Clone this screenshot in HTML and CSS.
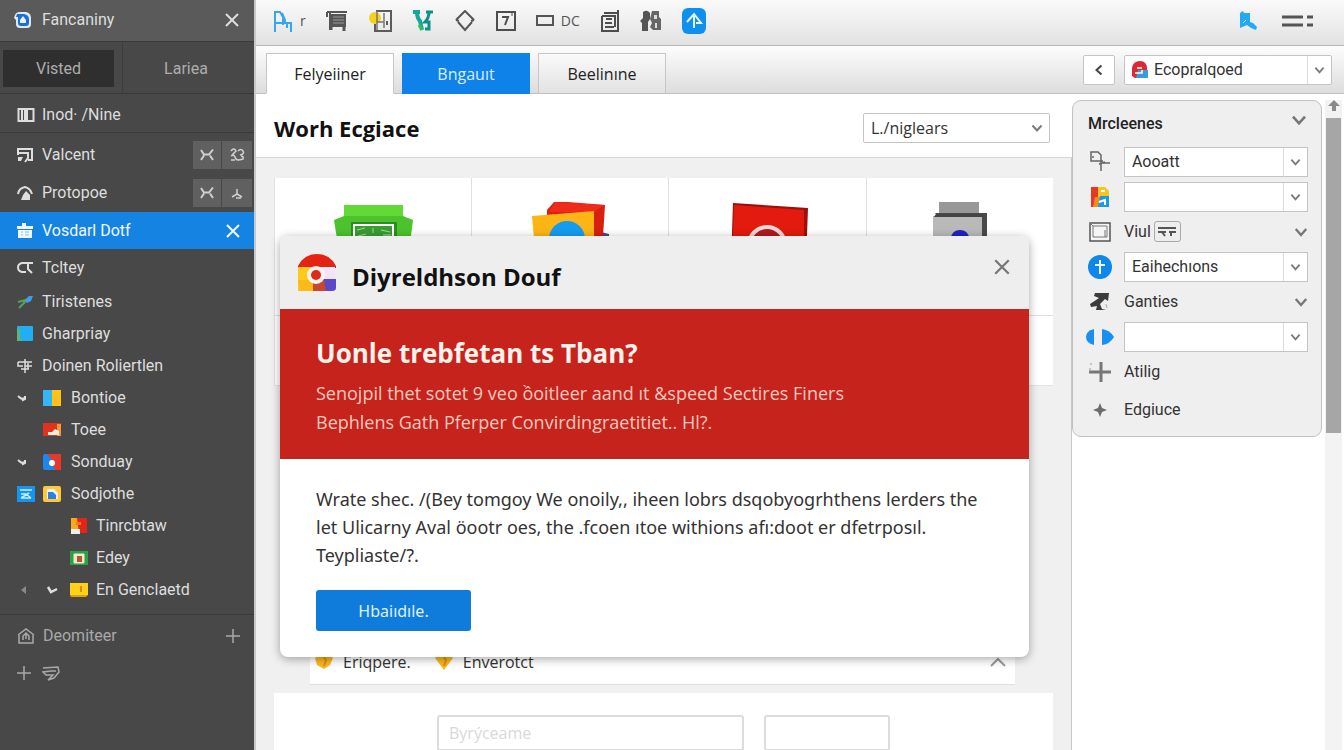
FILE: index.html
```html
<!DOCTYPE html>
<html lang="en">
<head>
<meta charset="utf-8">
<meta name="viewport" content="width=device-width, initial-scale=1">
<title>Worh Ecgiace</title>
<link rel="stylesheet" href="styles.css">
</head>
<body>
<svg class="defs" aria-hidden="true">
  <symbol id="cross" viewBox="0 0 16 16"><path d="M2 2 14 14M14 2 2 14" fill="none" stroke="currentColor" stroke-width="2"/></symbol>
  <symbol id="chev" viewBox="0 0 12 12"><path d="M1.500 3.500 6 8.500 10.500 3.500" fill="none" stroke="currentColor" stroke-width="2"/></symbol>
  <symbol id="plus" viewBox="0 0 16 16"><path d="M8 1V15M1 8H15" fill="none" stroke="currentColor" stroke-width="1.500"/></symbol>
  <symbol id="swap" viewBox="0 0 16 16"><path d="M2 3 5 7.500H10L14 2.500M2 13 5 8.500M11 8.500 14 13" fill="none" stroke="currentColor" stroke-width="2"/></symbol>
  <symbol id="twist" viewBox="0 0 16 16"><path d="M1 6 4 8.500H9M5 10.500 8 9V6" fill="none" stroke="currentColor" stroke-width="2"/></symbol>
</svg>
<div class="app">
  <aside class="sidebar">
    <header class="side-head">
      <svg class="ic18" viewBox="0 0 18 18"><path d="M1 4Q2 1 6 1h6q5 1 5 6v6q0 4-4 4H6q-4 0-4-4V9L0 7z" fill="#dcebfa"/><path d="M3 3h7q5 1 5 5v4q0 3-3 3H7q-3 0-3-3V6H2z" fill="#1c6fd0"/><path d="M6 12V9l3-4 3 4v3z" fill="#e8f3ff"/></svg>
      <span class="grow">Fancaniny</span>
      <button class="bare" aria-label="Close sidebar"><svg class="ic16"><use href="#cross"/></svg></button>
    </header>
    <div class="side-tabs">
      <div><button class="side-tab on">Visted</button></div>
      <div><button class="side-tab">Lariea</button></div>
    </div>
    <a class="side-top" href="#">
      <svg class="ic18" viewBox="0 0 18 18"><path d="M1.500 3H8V15H1.500zM11 3h5.500v12H9" fill="none" stroke="currentColor" stroke-width="2"/><path d="M4 4h2v10H4zM8 2h3v14H8z" fill="currentColor"/></svg>
      <span>Inod· /Nine</span>
    </a>
    <nav class="tree">
      <div class="row tall"><a href="#"><svg class="ic16" viewBox="0 0 16 16"><path d="M1 8V2H15V13H11M1 6H11V11L8 15" fill="none" stroke="currentColor" stroke-width="2"/><path d="M1 10h5l-2 4H1z" fill="currentColor"/></svg><span>Valcent</span></a>
        <span class="pair"><button aria-label="Swap"><svg class="ic16"><use href="#swap"/></svg></button><button aria-label="Link"><svg class="ic16" viewBox="0 0 16 16"><path d="M2 4Q5 0 7 4L3 8M9 4q3-3 5 0t-3 4M2 9q3-2 4 1t3 3 5-1q1-3-2-3M2 13h4" fill="none" stroke="currentColor" stroke-width="1.500"/></svg></button></span></div>
      <div class="row tall"><a href="#"><svg class="ic16" viewBox="0 0 16 16"><path d="M1 9Q2 3 8 2q5 1 7 7" fill="none" stroke="currentColor" stroke-width="2"/><path d="M4 15l2-5 3-4 4 4v5z" fill="currentColor"/></svg><span>Protopoe</span></a>
        <span class="pair"><button aria-label="Swap"><svg class="ic16"><use href="#swap"/></svg></button><button aria-label="Pin"><svg class="ic16" viewBox="0 0 16 16"><path d="M8 4V9L3 12M8 9L13 12M7 13h5" fill="none" stroke="currentColor" stroke-width="1.500"/></svg></button></span></div>
      <div class="row active"><a href="#"><svg class="ic16" viewBox="0 0 16 16"><path d="M0 3h5V0h4v3h7v3H0zM1 7h14v8H1z" fill="currentColor"/><path d="M4 9h2M8 9h4M4 12h2M8 12h4" stroke="#7fbdf2"/></svg><span>Vosdarl Dotf</span></a>
        <button class="bare" aria-label="Close item"><svg class="ic16"><use href="#cross"/></svg></button></div>
      <div class="row mid"><a href="#"><svg class="ic16" viewBox="0 0 16 16"><path d="M9 3H5Q1 4 1 7.500T5 12H9M7 3H16M11 3V9L15 13" fill="none" stroke="currentColor" stroke-width="2"/></svg><span>Tcltey</span></a></div>
      <div class="row"><a href="#"><svg class="ic16" viewBox="0 0 16 16"><path d="M1 8 9 6 6 10 2 14M5 11l5-5" fill="none" stroke="#58a05a" stroke-width="2"/><path d="M8 6 12 2H16L14 7 10 9z" fill="#3aa0ee"/></svg><span>Tiristenes</span></a></div>
      <div class="row"><a href="#"><svg class="ic16" viewBox="0 0 16 16"><rect width="16" height="15" rx="1" fill="#22aef5"/><path d="M0 2 3 4V12L5 15H0z" fill="#5cb870"/></svg><span>Gharpriay</span></a></div>
      <div class="row"><a href="#"><svg class="ic16" viewBox="0 0 16 16"><path d="M1 4H15M1 4V8H6M4 11H12M8 1V15M8 8h7M11 5v6" fill="none" stroke="currentColor" stroke-width="1.500"/></svg><span>Doinen Roliertlen</span></a></div>
      <div class="row l2"><a href="#"><svg class="ic16"><use href="#twist"/></svg><svg class="ic18" viewBox="0 0 18 16"><path d="M0 0h9v16H0z" fill="#35b5f5"/><path d="M9 0h9v16H9z" fill="#ffc21a"/></svg><span>Bontioe</span></a></div>
      <div class="row l2"><a href="#"><span class="ic16"></span><svg class="ic18" viewBox="0 0 18 16"><path d="M0 1h18v13H0z" fill="#e2321f"/><path d="M14 2h4v12h-4z" fill="#f49a3c"/><path d="M5 13V10l4 0 3-3 4 2v4z" fill="#fff0dc"/></svg><span>Toee</span></a></div>
      <div class="row l2"><a href="#"><svg class="ic16"><use href="#twist"/></svg><svg class="ic18" viewBox="0 0 18 16"><rect width="18" height="16" rx="2" fill="#1d87ee"/><path d="M4 0h14v16h-6l-2-4-1-6z" fill="#e5392d"/><circle cx="9" cy="9" r="3" fill="#fff"/></svg><span>Sonduay</span></a></div>
      <div class="row l2"><a href="#"><svg class="ic18 sq" viewBox="0 0 18 16"><rect width="18" height="16" fill="#1496f0"/><path d="M3 4H15M4 8h5M4 12 12 7M9 8l5 4M4 12h10" fill="none" stroke="#c8ecff" stroke-width="1.500"/></svg><svg class="ic18" viewBox="0 0 18 16"><rect width="18" height="16" rx="2" fill="#ffc83a"/><path d="M4 3h7l4 4v6H4z" fill="#e9f2fb"/><path d="M5 6h5l3 3v4H5z" fill="#2f7fe0"/></svg><span>Sodjothe</span></a></div>
      <div class="row l3"><a href="#"><svg class="ic18" viewBox="0 0 18 16"><path d="M1 0h8v16H1z" fill="#f9a91c"/><path d="M7 0h10v15H9z" fill="#e3241d"/><path d="M1 11h9v5H1z" fill="#eee"/><path d="M6 4h5v3H6z" fill="#f7761c"/></svg><span>Tinrcbtaw</span></a></div>
      <div class="row l3"><a href="#"><svg class="ic18" viewBox="0 0 18 16"><path d="M0 1h18v14H0z" fill="#2fa043"/><path d="M4 4h10v9H4z" fill="#fbe7c6" stroke="#d9f2dc"/><path d="M7 6h5v6H7z" fill="#b5562e"/></svg><span>Edey</span></a></div>
      <div class="row l3 arrows"><a href="#"><svg class="ic16 dim" viewBox="0 0 16 16"><path d="M10 4V12L5 8z" fill="currentColor"/></svg><svg class="ic16" viewBox="0 0 16 16"><path d="M5 5 8 10 14 7" fill="none" stroke="currentColor" stroke-width="2.500"/></svg><svg class="ic18" viewBox="0 0 18 16"><path d="M0 1h18v12H0z" fill="#ffd21a"/><path d="M0 13h18l-2 2H1z" fill="#e0a010"/><path d="M11 4v6" stroke="#d98e10" stroke-width="2"/></svg><span>En Genclaetd</span></a></div>
    </nav>
    <footer class="side-foot">
      <div class="row"><a href="#"><svg class="ic18" viewBox="0 0 18 18"><path d="M1 8 9 2 17 8M2 8V16H16V8M6 13V9l3-3 3 3v4M9 7v5" fill="none" stroke="currentColor" stroke-width="1.500"/></svg><span>Deomiteer</span></a><button class="bare" aria-label="Add"><svg class="ic16"><use href="#plus"/></svg></button></div>
      <div class="row add"><button class="bare" aria-label="New"><svg class="ic16"><use href="#plus"/></svg></button><button class="bare" aria-label="Note"><svg class="ic18" viewBox="0 0 18 18"><path d="M1 4 16 3 17 8 12 14 6 16 11 11H4L1 8 9 7H14" fill="none" stroke="currentColor" stroke-width="1.500"/></svg></button></div>
    </footer>
  </aside>

  <div class="main">
    <div class="toolbar">
      <button class="bare pairtool" aria-label="Font"><svg width="20" height="24" viewBox="0 0 20 24"><path d="M2 23V3H7L10 8V16M2 14H12M9 4 12 11V14H18V23M14 14V19" fill="none" stroke="#38a6ec" stroke-width="2"/></svg><span>r</span></button>
      <button class="bare" aria-label="Print"><svg width="22" height="22" viewBox="0 0 22 22"><path d="M1 2H21M4 3V20M1 2V7" stroke="#555" stroke-width="2"/><path d="M5 4h15v13H5z" fill="#555"/><path d="M7 7h11M7 10h11M7 13h11" stroke="#999"/><path d="M5 16V20M18 15V21" stroke="#555" stroke-width="3"/></svg></button>
      <button class="bare" aria-label="Door"><svg width="24" height="24" viewBox="0 0 24 24"><circle cx="7" cy="9" r="6" fill="#f2d21f"/><path d="M8 2H23V22H7V15" fill="none" stroke="#5b5b5b" stroke-width="2"/><path d="M9 2V21M9 13h7V4M16 13v6" fill="none" stroke="#777" stroke-width="1.500"/><path d="M19 12v4" stroke="#5b5b5b" stroke-width="2"/></svg></button>
      <button class="bare" aria-label="Branch"><svg width="22" height="22" viewBox="0 0 22 22"><path d="M1 2H8M5 2Q5 8 8 11L10 20" fill="none" stroke="#14a79d" stroke-width="4"/><path d="M21 2H14M17 2Q17 8 13 12H17V19H13" fill="none" stroke="#0e8f88" stroke-width="3"/><path d="M7 15l3 5" stroke="#35c25c" stroke-width="3"/></svg></button>
      <button class="bare" aria-label="Shape"><svg width="22" height="22" viewBox="0 0 22 22"><path d="M2 10 11 1 20 10M4 12 11 20 18 12M2 10l3 1M20 10l-3 1" fill="none" stroke="#555" stroke-width="2"/></svg></button>
      <button class="bare" aria-label="Text"><svg width="20" height="22" viewBox="0 0 20 22"><path d="M1 2H19V20H1zM6 7H12L9 15" fill="none" stroke="#4d4d4d" stroke-width="2"/><path d="M16 1v5" stroke="#4d4d4d"/></svg></button>
      <button class="bare pairtool" aria-label="Frame"><svg width="18" height="12" viewBox="0 0 18 12"><path d="M1 1H17V10H1z" fill="none" stroke="#555" stroke-width="2"/></svg><span>DC</span></button>
      <button class="bare" aria-label="List"><svg width="20" height="24" viewBox="0 0 20 24"><path d="M2 7V22H18V1M2 7H15V18M4 4H18M6 10H12M5 14H12M5 18H14" fill="none" stroke="#4d4d4d" stroke-width="2"/></svg></button>
      <button class="bare" aria-label="Users"><svg width="22" height="22" viewBox="0 0 22 22"><path d="M3 2Q7-1 10 3V9L8 12V21H2V13L0 11 3 8z" fill="#555"/><path d="M12 1H19V7L21 9V20H13L10 17 12 13 10 9z" fill="#666"/><path d="M14 5h3v4h-3zM15 13h2v5h-2z" fill="#ddd"/></svg></button>
      <button class="bare" aria-label="Upload"><svg width="24" height="26" viewBox="0 0 24 26"><rect width="24" height="26" rx="6" fill="#0f8ff0"/><path d="M5 14 12 6 19 15H14M12 7V20" fill="none" stroke="#e8f6ff" stroke-width="2"/></svg></button>
      <span class="grow"></span>
      <button class="bare" aria-label="Share"><svg width="20" height="20" viewBox="0 0 20 20"><path d="M2 2 5 0 6 2H12V11L15 12 19 16 18 19 13 17 9 14 2 17z" fill="#22aaf2"/><path d="M5 12l3-3" stroke="#fff"/></svg></button>
      <button class="bare menu" aria-label="Menu"><svg width="32" height="16" viewBox="0 0 32 16"><path d="M0 4H21M0 12H21M25 4h6M25 12h6" stroke="#555" stroke-width="3"/></svg></button>
    </div>

    <div class="tabbar">
      <div class="tabs" role="tablist">
        <button class="tab first" role="tab" aria-selected="true">Felyeiiner</button>
        <button class="tab blue" role="tab">Bngauıt</button>
        <button class="tab" role="tab">Beelinıne</button>
      </div>
      <div class="tab-tools">
        <button class="back" aria-label="Back"><svg width="12" height="12" viewBox="0 0 12 12"><path d="M8.500 1.500 3.500 6 8.500 10.500" fill="none" stroke="#444" stroke-width="2"/></svg></button>
        <label class="pick wide"><svg class="ic18 lead" viewBox="0 0 18 18"><path d="M1 15V7Q2 0 9 0t7 8V9H8v8H4z" fill="#d92a35"/><path d="M7 9h10v8H5z" fill="#3a9bd8"/><path d="M6 7h5M4 12h7V9" fill="none" stroke="#fff" stroke-width="1.500"/></svg>
          <select aria-label="Account"><option>Ecopralqoed</option></select><svg class="arrow"><use href="#chev"/></svg></label>
      </div>
    </div>

    <div class="body">
      <main class="work">
        <div class="work-head">
          <h1>Worh Ecgiace</h1>
          <label class="pick plain"><select aria-label="Filter"><option>L./niglears</option></select><svg class="arrow"><use href="#chev"/></svg></label>
        </div>
        <div class="canvas">
          <div class="tiles">
            <div class="tile"><svg width="80" height="70" viewBox="0 0 80 70"><path d="M11 3H70V18H11z" fill="#62d936"/><path d="M1 18 11 14H70L80 18 76 50H6z" fill="#4cc22c"/><path d="M18 20H64V50H18z" fill="#2b8f20"/><path d="M21 23H60V50H21z" fill="#3a9c31" stroke="#fff" stroke-width="2"/><path d="M24 28 32 26M40 26v5M48 28l9 2M25 34l8-2M50 33h8" stroke="#a5dd9a" stroke-width="1"/></svg></div>
            <div class="tile"><svg width="78" height="70" viewBox="0 0 78 70"><path d="M70 30 78 32V50H60z" fill="#4b4a7c"/><path d="M24-1 74 3 71 50H16V8z" fill="#d8200f"/><path d="M18 10 24 0 73 3 63 10z" fill="#ef2b1a"/><path d="M1 14 63 9V60H5z" fill="#fdb515"/><circle cx="36" cy="37" r="18" fill="#169bf2"/></svg></div>
            <div class="tile"><svg width="80" height="70" viewBox="0 0 80 70"><path d="M5 1 80 6 78 60H3z" fill="#9c1109"/><path d="M6 3 76 8V60H4z" fill="#e31a0e"/><circle cx="39" cy="43" r="18" fill="#b31820" stroke="#ead9d5" stroke-width="4"/></svg></div>
            <div class="tile"><svg width="56" height="70" viewBox="0 0 56 70"><path d="M7 0H47V12H7z" fill="#989898"/><path d="M3 11H55V60H49z" fill="#4a4a4a"/><path d="M1 14H50V60H1z" fill="#b9b9b9"/><path d="M4 12H52V15H2z" fill="#444"/><path d="M19 36Q20 28 28 28T37 36z" fill="#2222c0"/></svg></div>
            <div class="tile low"></div>
          </div>
          <div class="strip">
            <svg class="gem" viewBox="0 0 18 18"><path d="M0 5 5 1H13L18 5 15 12 9 16 2 12z" fill="#fcb81e"/><path d="M8 3l3 4-2 6" fill="none" stroke="#e28d0c" stroke-width="2"/></svg>
            <span>Eriqpere.</span>
            <svg class="gem second" viewBox="0 0 18 18"><path d="M0 5 5 1H13L18 5 9 17z" fill="#fcb81e"/><path d="M8 3l3 4-2 6" fill="none" stroke="#e28d0c" stroke-width="2"/></svg>
            <span class="grow">Enverotct</span>
            <svg class="ic18" viewBox="0 0 18 18"><path d="M2 13 9 6 16 13" fill="none" stroke="#999" stroke-width="2"/></svg>
          </div>
          <div class="lower">
            <input class="box" type="text" placeholder="Byrýceame" aria-label="Search">
            <input class="box" type="text" aria-label="Value">
          </div>
        </div>

        <section class="dialog" role="dialog" aria-labelledby="dlg-title">
          <header class="dlg-head">
            <svg width="38" height="38" viewBox="0 0 38 38"><path d="M0 12Q6 0 19 0T38 12V14H0z" fill="#e42313"/><path d="M0 13H12V37H0z" fill="#fdc91c"/><path d="M0 26H20V37H2z" fill="#fbb91a"/><path d="M12 13H37V25H20z" fill="#efe6fb"/><path d="M24 25H38V34Q38 37 34 37H24z" fill="#5b48c8"/><path d="M15 27 26 26 28 37H15z" fill="#c8472e"/><circle cx="18" cy="21" r="9" fill="#fff3ee"/><circle cx="18" cy="21" r="5" fill="#dc2a1c"/></svg>
            <h2 id="dlg-title">Diyreldhson Douf</h2>
            <button class="bare" aria-label="Close"><svg class="ic18"><use href="#cross"/></svg></button>
          </header>
          <div class="alert">
            <h3>Uonle trebfetan ts Tban?</h3>
            <p>Senojpil thet sotet 9 veo ồoitleer aand ıt &amp;speed Sectires Finers<br>Bephlens Gath Pferper Convirdingraetitiet.. Hl?.</p>
          </div>
          <div class="copy">
            <p>Wrate shec. /(Bey tomgoy We onoily,, iheen lobrs dsqobyogrhthens lerders the<br>let Ulicarny Aval öootr oes, the .fcoen ıtoe withions afı:doot er dfetrposıl.<br>Teypliaste/?.</p>
            <button class="primary">Hbaiıdıle.</button>
          </div>
        </section>
      </main>

      <aside class="side-panel">
        <div class="panel">
          <div class="panel-head"><h2>Mrcleenes</h2><svg class="big"><use href="#chev"/></svg></div>
          <div class="prop"><svg width="22" height="22" viewBox="0 0 22 22"><path d="M2 1H9L12 4V10H2zM4 5v2M2 10H14M12 12H21M12 10v10M10 13l6-2" fill="none" stroke="#666" stroke-width="1.500"/></svg><label class="pick"><select aria-label="Source"><option>Aooatt</option></select><svg class="arrow"><use href="#chev"/></svg></label></div>
          <div class="prop"><svg width="20" height="22" viewBox="0 0 20 22"><path d="M1 1H8V21H1z" fill="#e53924"/><path d="M8 1H15L19 5V14H8z" fill="#f6c522"/><path d="M5 11H12V21H3z" fill="#f58a1e"/><path d="M10 10H19V21H8z" fill="#189be4"/><path d="M11 5h4M9 16l6-2v5" fill="none" stroke="#fff" stroke-width="2"/></svg><label class="pick"><select aria-label="Colour"><option></option></select><svg class="arrow"><use href="#chev"/></svg></label></div>
          <div class="prop"><svg width="22" height="20" viewBox="0 0 22 20"><path d="M1 1H21V19H1z" fill="#f5f5f5" stroke="#555" stroke-width="1.500"/><path d="M4 4H18V15H4zM1 1l3 3M16 8v7" fill="none" stroke="#777"/></svg><div class="label"><span>Viul</span><button class="chip" aria-label="Mode"><svg width="20" height="12" viewBox="0 0 20 12"><path d="M1 2H19M1 6H9M12 6H19M5 6l3 4M14 6v4" fill="none" stroke="#555" stroke-width="2"/></svg></button><span class="grow"></span><svg class="arr"><use href="#chev"/></svg></div></div>
          <div class="prop"><svg width="24" height="24" viewBox="0 0 24 24"><circle cx="12" cy="12" r="12" fill="#0f86ea"/><path d="M12 5V19M7 10H17" stroke="#eaf6ff" stroke-width="2"/></svg><label class="pick"><select aria-label="Method"><option>Eaihechıons</option></select><svg class="arrow"><use href="#chev"/></svg></label></div>
          <div class="prop"><svg width="22" height="20" viewBox="0 0 22 20"><path d="M6 1H20L19 9 16 7 11 12 13 17 17 18H7L8 14 2 15 1 12 10 6 5 4z" fill="#3c3c3c"/><path d="M17 12 18 16" stroke="#aaa"/></svg><div class="label"><span class="grow">Ganties</span><svg class="arr"><use href="#chev"/></svg></div></div>
          <div class="prop"><svg width="28" height="18" viewBox="0 0 28 18"><path d="M8 1V17Q0 15 0 9T8 1z" fill="#1a8ff0"/><path d="M16 1Q24 2 28 9 24 16 16 17z" fill="#1a8ff0"/></svg><label class="pick"><select aria-label="Side"><option></option></select><svg class="arrow"><use href="#chev"/></svg></label></div>
          <div class="prop"><svg width="22" height="22" viewBox="0 0 22 22"><path d="M12 1V21M0 11H22" stroke="#777" stroke-width="3"/><path d="M1 3h2M1 7v4" stroke="#999"/></svg><div class="label">Atilig</div></div>
          <div class="prop last"><svg width="14" height="14" viewBox="0 0 14 14"><path d="M7 0 9 5 14 7 9 9 7 14 5 9 0 7 5 5z" fill="#6c6c6c"/></svg><div class="label">Edgiuce</div></div>
        </div>
        <div class="scroll"><svg width="14" height="12" viewBox="0 0 14 12"><path d="M7 0 13 6H9V11H5V6H1z" fill="#8a8a8a"/></svg><div class="thumb"></div></div>
      </aside>
    </div>
  </div>
</div>
</body>
</html>
```
FILE: styles.css
```css
* { box-sizing: border-box; }
body { margin: 0; font: 16px/20px "Open Sans", "Noto Sans", sans-serif; color: #333; background: #fff; }
h1, h2, h3, p { margin: 0; }
button, select, input { font: inherit; color: inherit; }
button { cursor: pointer; padding: 0; border: 0; }
a { color: inherit; text-decoration: none; }
svg { display: block; flex: none; }
.defs { position: absolute; width: 0; height: 0; }
.grow { flex: 1; }
.bare { background: none; display: flex; align-items: center; }
.ic16 { width: 16px; height: 16px; flex: none; }
.ic18 { width: 18px; height: 18px; }
.app { display: flex; height: 100vh; overflow: hidden; }

/* Sidebar */
.sidebar { width: 256px; flex: none; background: #484848; color: #dedede; border-right: 2px solid #c9c9c9; font-family: Roboto, sans-serif; }
.side-head { display: flex; align-items: center; gap: 10px; height: 42px; padding: 0 14px 2px; background: #5a5a5a; border-bottom: 1px solid #3a3a3a; }
.side-tabs { display: grid; grid-template-columns: 122px 1fr; height: 52px; border-bottom: 1px solid #383838; color: #adadad; }
.side-tabs > div { padding: 8px 8px 6px 3px; display: flex; }
.side-tabs > div + div { border-left: 1px solid #3d3d3d; }
.side-tab { flex: 1; background: none; }
.side-tab.on { background: #2f2f2f; }
.side-top { display: flex; align-items: center; gap: 7px; height: 39px; padding: 3px 0 0 17px; border-bottom: 1px solid #3b3b3b; }
.tree { padding-top: 3px; }
.row { display: flex; align-items: center; height: 32px; padding-right: 13px; }
.row a { flex: 1; display: flex; align-items: center; gap: 9px; padding-left: 17px; }
.row.tall { height: 38px; padding-right: 2px; }
.row.mid { height: 37px; }
.row.active { height: 37px; background: #1583e2; color: #f2f8ff; }
.pair { display: grid; grid-template-columns: 28px 30px; gap: 1px; height: 28px; }
.pair button { display: grid; place-items: center; background: #606060; color: #d0d0d0; }
.l2 a { gap: 10px; }
.l3 a { padding-left: 70px; gap: 8px; }
.l3.arrows a { padding-left: 16px; gap: 11px; }
.l3.arrows .ic18 { margin-right: -3px; }
.sq { margin-right: -2px; }
.dim { color: #8a8a8a; }
.side-foot { margin-top: 8px; padding-top: 2px; border-top: 1px solid #3a3a3a; color: #a9a9a9; }
.side-foot .row { height: 37px; }
.side-foot .row a { gap: 8px; }
.side-foot .add { padding-left: 16px; gap: 10px; }

/* Toolbar and tabs */
.main { flex: 1; min-width: 0; display: flex; flex-direction: column; }
.toolbar { display: flex; align-items: center; gap: 20px; height: 46px; padding: 0 30px 4px 17px; background: linear-gradient(#fafafa, #e2e2e2); border-bottom: 1px solid #b5b5b5; flex: none; }
.pairtool { gap: 7px; color: #555; font-size: 14px; }
.menu { margin-left: 4px; }
.tabbar { display: flex; justify-content: space-between; align-items: flex-end; height: 48px; padding: 0 12px 0 10px; background: linear-gradient(#fdfdfd, #dcdcdc); box-shadow: inset 0 -1px #c0c0c0; flex: none; }
.tabs { display: flex; gap: 8px; }
.tab { width: 128px; height: 41px; border: 1px solid #c6c6c6; border-bottom-color: #c0c0c0; background: linear-gradient(#fafafa, #e2e2e2); color: #222; }
.tab.first { background: #fff; border-bottom-color: #fff; }
.tab.blue { background: #0f82ea; border-color: #0f82ea; color: #d9efff; }
.tab-tools { display: flex; gap: 9px; padding-bottom: 9px; }
.back { display: grid; place-items: center; width: 32px; background: #fff; border: 1px solid #c4c4c4; border-radius: 2px; }

/* Drop-downs */
.pick { position: relative; display: flex; align-items: center; height: 30px; background: #fff; border: 1px solid #c4c4c4; }
.pick select { appearance: none; width: 100%; height: 100%; padding: 0 28px 0 7px; border: 0; background: none; color: #333; }
.pick .arrow { position: absolute; right: 0; top: 0; width: 24px; height: 100%; padding: 8px 6px; border-left: 1px solid #dcdcdc; color: #7a7a7a; pointer-events: none; }
.pick .lead { margin-left: 6px; }
.pick.wide { width: 208px; border-radius: 2px; font-family: Roboto, sans-serif; }
.pick.wide select { padding-left: 5px; }
.pick.plain { width: 187px; border-radius: 2px; }
.pick.plain .arrow { border: 0; }

/* Work area */
.body { flex: 1; min-height: 0; display: flex; }
.work { position: relative; flex: 1; min-width: 0; display: flex; flex-direction: column; }
.work-head { display: flex; align-items: center; justify-content: space-between; height: 64px; padding: 4px 22px 0 18px; background: #fff; border-bottom: 1px solid #d6d6d6; flex: none; }
h1 { font-size: 22px; line-height: 28px; font-weight: 700; color: #111; }
.canvas { flex: 1; min-height: 0; display: flex; flex-direction: column; padding: 20px 18px 0; background: #f0f0f0; border-right: 1px solid #c8c8c8; }
.tiles { display: grid; grid-template-columns: repeat(3, 198fr) 188fr; grid-template-rows: 138px 69px; background: #fff; border-bottom: 1px solid #e2e2e2; flex: none; }
.tile { display: flex; justify-content: center; padding-top: 24px; border-left: 1px solid #e0e0e0; border-bottom: 1px solid #e0e0e0; }
.tile.low { grid-column: 1 / -1; border-bottom: 0; }
.strip { display: flex; align-items: center; height: 46px; margin: 253px 38px 0 36px; padding: 0 8px 0 5px; background: #fff; border-bottom: 1px solid #dedede; flex: none; }
.gem { width: 18px; height: 18px; margin-right: 10px; }
.gem.second { margin-left: 24px; }
.lower { flex: 1; display: grid; grid-template-columns: 308fr 126fr; align-items: start; gap: 20px; margin-top: 8px; padding: 22px 163px 0; background: #fff; }
.box { min-width: 0; width: 100%; height: 36px; border: 2px solid #dcdcdc; border-radius: 3px; background: #fff; padding: 0 10px; }
.box::placeholder { color: #d9d9d9; opacity: 1; }

/* Dialog */
.dialog { position: absolute; top: 142px; left: 24px; right: 43px; background: #fff; border-radius: 8px; overflow: hidden; box-shadow: 0 2px 10px rgba(0, 0, 0, .35); }
.dlg-head { display: flex; align-items: center; gap: 16px; height: 73px; padding: 0 18px; background: #eee; }
.dlg-head h2 { flex: 1; padding-top: 8px; font-size: 24px; line-height: 34px; font-weight: 700; color: #111; }
.dlg-head .bare { align-self: flex-start; margin-top: 22px; color: #777; }
.alert { padding: 28px 36px 22px; background: #c5231c; color: #f7c9bd; font-size: 18px; line-height: 29px; }
.alert h3 { margin-bottom: 10px; font-size: 26px; line-height: 32px; font-weight: 700; color: #fff2ea; }
.copy { padding: 26px 36px; font-family: "Noto Sans", sans-serif; font-size: 18px; line-height: 28px; color: #333; }
.primary { display: block; width: 155px; height: 41px; margin-top: 21px; border-radius: 3px; background: #0f7cdc; color: #dff2ff; font-size: 16px; }

/* Right panel */
.side-panel { width: 272px; flex: none; display: flex; gap: 3px; padding-top: 6px; font-family: Roboto, sans-serif; }
.panel { width: 250px; align-self: flex-start; padding: 3px 13px 5px 15px; background: #efefef; border: 1px solid #c2c2c2; border-radius: 9px; }
.panel-head { display: flex; align-items: center; justify-content: space-between; height: 40px; color: #222; }
.panel-head h2 { font-size: 16px; font-weight: 500; }
.big { width: 16px; height: 16px; margin: 0 1px 8px 0; color: #777; }
.prop { display: grid; grid-template-columns: 24px minmax(0, 1fr); gap: 12px; align-items: center; justify-items: center; height: 35px; }
.prop.last { height: 42px; }
.prop > :last-child { justify-self: stretch; }
.label { display: flex; align-items: center; gap: 3px; }
.arr { width: 14px; height: 14px; color: #777; }
.chip { display: grid; place-items: center; width: 27px; height: 21px; background: #eee; border: 1px solid #aaa; border-radius: 3px; }
.scroll { display: flex; flex-direction: column; align-items: center; gap: 6px; width: 17px; background: #f3f3f3; }
.thumb { width: 15px; height: 315px; background: #a6a6a6; }
```
